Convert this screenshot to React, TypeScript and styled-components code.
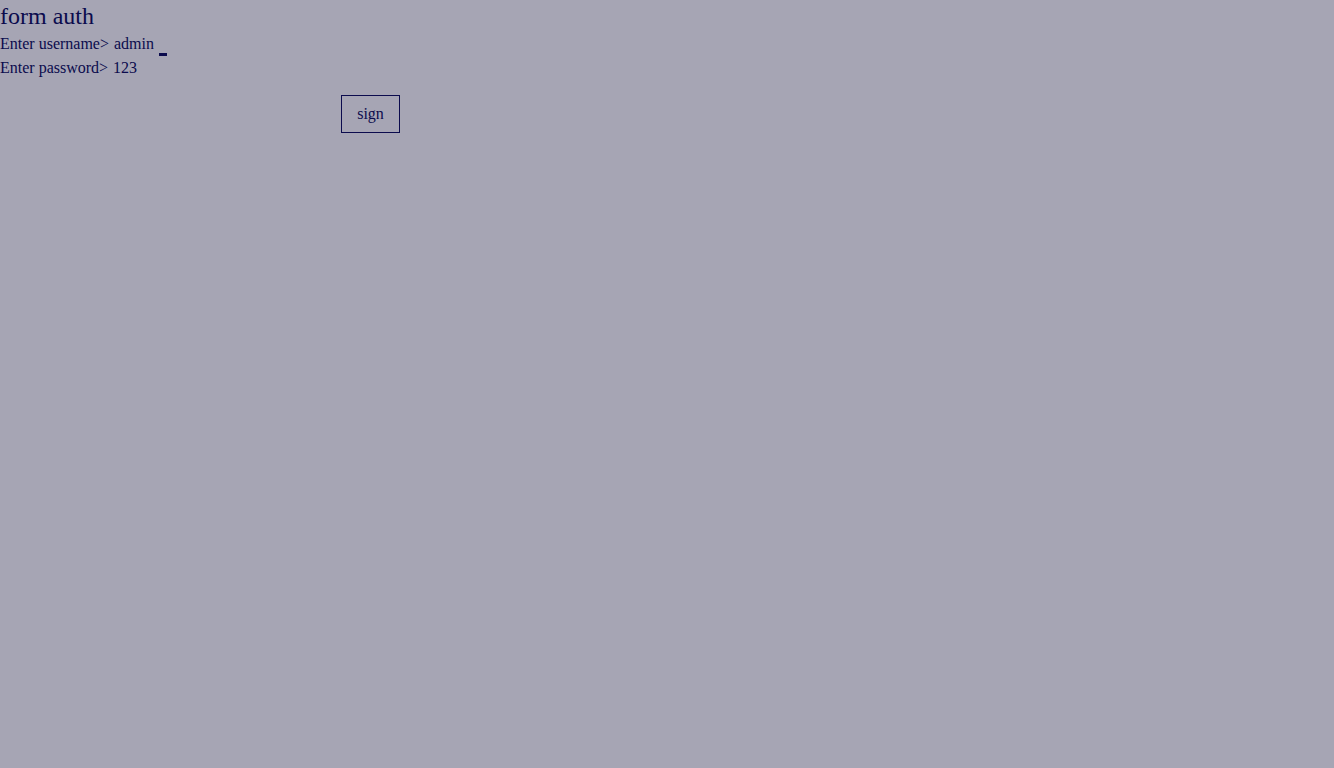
import React from "react";
import styled, { createGlobalStyle } from "styled-components";

const Global = createGlobalStyle`
  html, body { margin: 0; padding: 0; background: #a6a5b4; }
  body { font-family: "Liberation Serif", "Times New Roman", serif; color: #0b0b4d; }
`;

const Page = styled.div`
  min-height: 768px;
  background: #a6a5b4;
  display: flex;
  flex-direction: column;
`;

const Title = styled.h1`
  margin: 0;
  font-size: 24px;
  font-weight: normal;
  line-height: 32px;
`;

const Line = styled.div`
  font-size: 16px;
  line-height: 24px;
  display: flex;
  align-items: baseline;
`;

const Value = styled.span`
  margin-left: 5px;
`;

const Cursor = styled.span`
  display: inline-block;
  width: 8px;
  height: 3px;
  background: #0b0b4d;
  margin-left: 5px;
  align-self: flex-end;
  margin-bottom: 0;
`;

const Actions = styled.div`
  padding-top: 15px;
  padding-left: 341px;
  display: flex;
`;

const Button = styled.button`
  box-sizing: border-box;
  width: 59px;
  height: 38px;
  border: 1px solid #0b0b4d;
  background: transparent;
  color: #0b0b4d;
  font-family: "Liberation Serif", "Times New Roman", serif;
  font-size: 16px;
  padding: 0;
  cursor: pointer;
`;

export default function App() {
  return (
    <>
      <Global />
      <Page>
        <Title>form auth</Title>
        <Line>
          Enter username&gt;<Value>admin</Value>
          <Cursor />
        </Line>
        <Line>
          Enter password&gt;<Value>123</Value>
        </Line>
        <Actions>
          <Button>sign</Button>
        </Actions>
      </Page>
    </>
  );
}
